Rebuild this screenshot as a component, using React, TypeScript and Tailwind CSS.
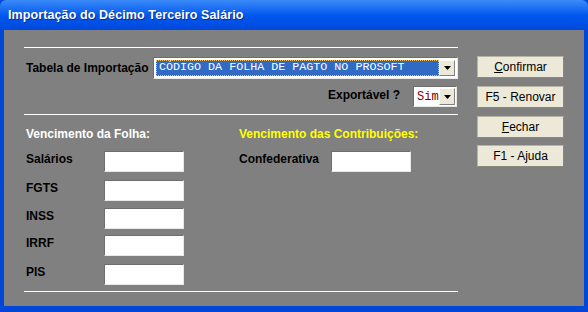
import React from "react";

const sans = { fontFamily: '"Liberation Sans", Arial, sans-serif' };

function TextBox({ w = 80 }: { w?: number }) {
  return (
    <div
      className="h-[21px] bg-white border border-t-[#6e6e6e] border-l-[#6e6e6e] border-b-[#e8e8e8] border-r-[#e8e8e8]"
      style={{ width: w }}
    />
  );
}

function Arrow() {
  return (
    <div className="w-[16px] h-full bg-[#ece9d8] border border-t-white border-l-white border-b-[#808080] border-r-[#808080] flex items-center justify-center">
      <svg width="7" height="4" viewBox="0 0 7 4">
        <polygon points="0,0 7,0 3.5,4" fill="#000" />
      </svg>
    </div>
  );
}

function Btn({ children }: { children: React.ReactNode }) {
  return (
    <div className="w-[87px] h-[22px] bg-[#ece9d8] border border-[#b8b4a4] border-b-[#8a887c] border-r-[#8a887c] flex items-center justify-center text-[12px] text-black leading-none">
      {children}
    </div>
  );
}

export default function App() {
  return (
    <div className="w-[588px] h-[312px] bg-[#0046d8] flex flex-col overflow-hidden" style={sans}>
      <div className="h-[30px] shrink-0 bg-gradient-to-b from-[#3a8af8] via-[#0058ee] to-[#0049dc] flex items-center pl-[8px] rounded-t-[6px]">
        <span className="text-white font-bold text-[12.5px] tracking-[0.1px]" style={{ textShadow: "1px 1px 0 #0a2a8a" }}>
          Importação do Décimo Terceiro Salário
        </span>
      </div>
      <div className="flex-1 mx-[4px] mr-[4px] mb-[6px] bg-[#808080] flex pt-[17px] pl-[20px]">
        <div className="w-[434px] flex flex-col">
          <div className="h-px bg-white" />
          <div className="flex items-center mt-[9px]">
            <div className="w-[129px] pl-[2px] font-bold text-[12px] text-black">Tabela de Importação</div>
            <div className="w-[305px] h-[22px] bg-white border border-t-[#6e6e6e] border-l-[#6e6e6e] border-b-[#e8e8e8] border-r-[#e8e8e8] flex items-stretch p-[2px]">
              <div className="flex-1 bg-[#316ac5] border border-dotted border-[#f0c060] flex items-center pl-[2px] text-white text-[11.7px] leading-none" style={{ fontFamily: '"Liberation Mono", "Courier New", monospace' }}>
                CÓDIGO DA FOLHA DE PAGTO NO PROSOFT
              </div>
              <Arrow />
            </div>
          </div>
          <div className="flex items-center justify-end mt-[7px] pr-[1px]">
            <span className="font-bold text-[12px] text-black mr-[13px] -mt-[3px]">Exportável ?</span>
            <div className="w-[44px] h-[21px] bg-white border border-t-[#6e6e6e] border-l-[#6e6e6e] border-b-[#e8e8e8] border-r-[#e8e8e8] flex items-stretch p-[1px]">
              <div className="flex-1 flex items-center pl-[2px] text-[#800000] text-[12px] leading-none" style={{ fontFamily: '"Liberation Mono", "Courier New", monospace' }}>
                Sim
              </div>
              <Arrow />
            </div>
          </div>
          <div className="h-px bg-white mt-[7px]" />
          <div className="flex mt-[12px]">
            <div className="w-[215px] pl-[2px] flex flex-col text-[12px] font-bold">
              <div className="text-white h-[14px] leading-[14px]">Vencimento da Folha:</div>
              <div className="flex items-center mt-[10px]">
                <span className="w-[78px] text-black -mt-[6px]">Salários</span>
                <TextBox />
              </div>
              <div className="flex items-center mt-[8px]">
                <span className="w-[78px] text-black -mt-[6px]">FGTS</span>
                <TextBox />
              </div>
              <div className="flex items-center mt-[7px]">
                <span className="w-[78px] text-black -mt-[6px]">INSS</span>
                <TextBox />
              </div>
              <div className="flex items-center mt-[6px]">
                <span className="w-[78px] text-black -mt-[6px]">IRRF</span>
                <TextBox />
              </div>
              <div className="flex items-center mt-[8px]">
                <span className="w-[78px] text-black -mt-[6px]">PIS</span>
                <TextBox />
              </div>
            </div>
            <div className="flex flex-col text-[12px] font-bold">
              <div className="text-[#ffff00] h-[14px] leading-[14px]">Vencimento das Contribuições:</div>
              <div className="flex items-center mt-[10px]">
                <span className="w-[92px] text-black -mt-[6px]">Confederativa</span>
                <TextBox />
              </div>
            </div>
          </div>
          <div className="h-px bg-white mt-[6px]" />
        </div>
        <div className="ml-[19px] flex flex-col pt-[9px]">
          <Btn>
            <span><span className="underline">C</span>onfirmar</span>
          </Btn>
          <div className="mt-[8px]">
            <Btn>F5 - Renovar</Btn>
          </div>
          <div className="mt-[8px]">
            <Btn>
              <span><span className="underline">F</span>echar</span>
            </Btn>
          </div>
          <div className="mt-[7px]">
            <Btn>F1 - Ajuda</Btn>
          </div>
        </div>
      </div>
    </div>
  );
}
